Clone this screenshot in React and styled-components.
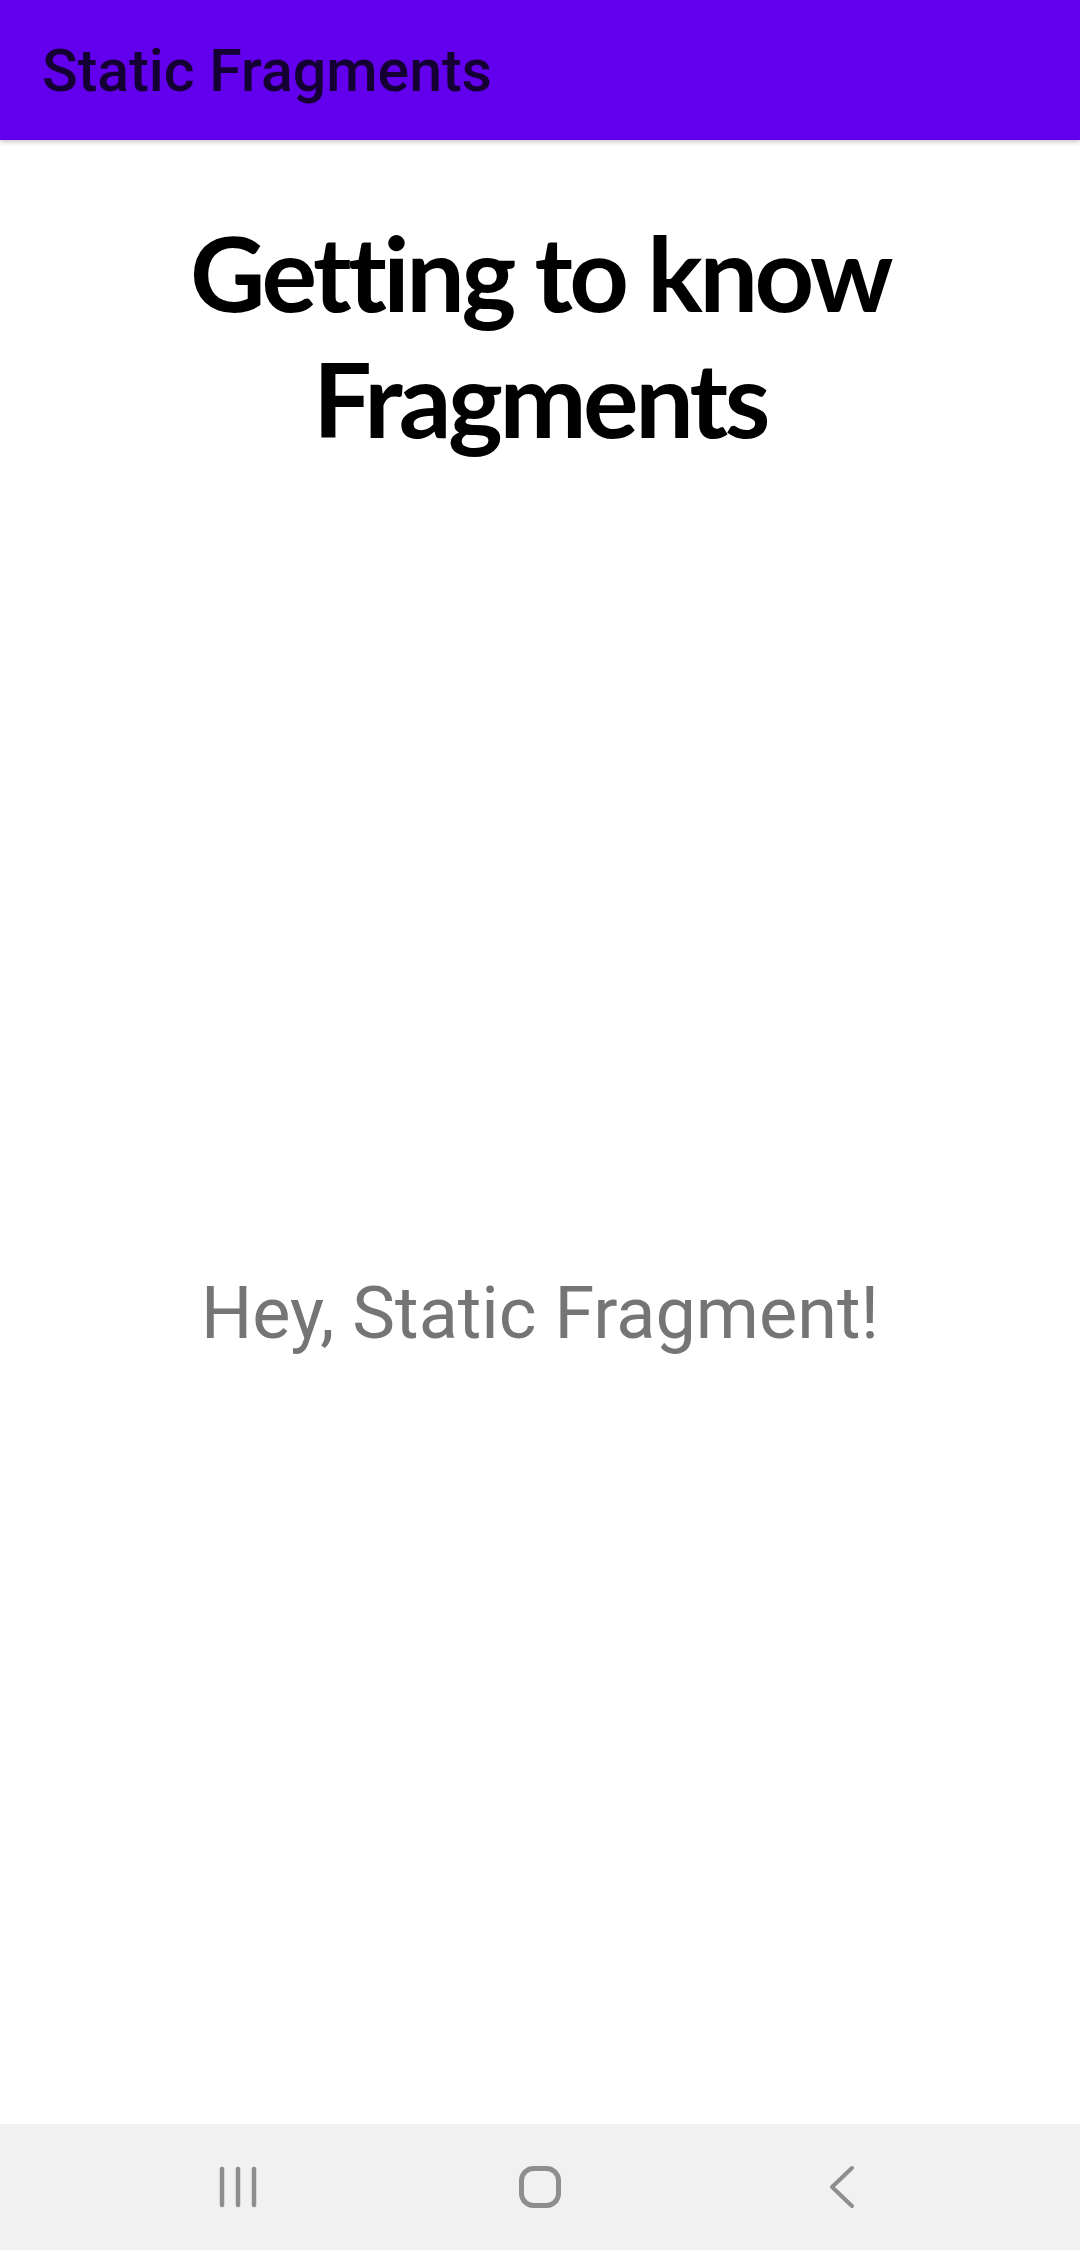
import styled, { createGlobalStyle } from "styled-components";

const GlobalStyle = createGlobalStyle`
  html, body {
    margin: 0;
    padding: 0;
    background: #ffffff;
  }
  body {
    font-family: Roboto, "Noto Sans", sans-serif;
  }
`;

const Screen = styled.div`
  display: flex;
  flex-direction: column;
  width: 1080px;
  height: 2250px;
  background: #ffffff;
  overflow: hidden;
`;

const AppBar = styled.header`
  display: flex;
  align-items: center;
  flex: 0 0 140px;
  padding: 0 42px;
  background: #6200ee;
  box-shadow: 0 2px 5px rgba(0, 0, 0, 0.22);
  position: relative;
  z-index: 1;
`;

const AppTitle = styled.h1`
  margin: 0;
  font-family: Roboto, sans-serif;
  font-weight: 500;
  font-size: 59px;
  color: #150033;
`;

const Content = styled.main`
  flex: 1;
  display: flex;
  flex-direction: column;
  align-items: center;
`;

const Heading = styled.h2`
  margin: 69px 0 0;
  font-family: Lato, "Open Sans", sans-serif;
  font-weight: 700;
  font-size: 104px;
  line-height: 126px;
  letter-spacing: -3.5px;
  color: #000000;
  text-align: center;
`;

const FragmentArea = styled.section`
  flex: 1;
  display: flex;
  align-items: center;
  justify-content: center;
  padding-top: 41px;
`;

const Greeting = styled.p`
  margin: 0;
  font-family: Roboto, sans-serif;
  font-size: 72px;
  color: #757575;
`;

const NavBar = styled.nav`
  flex: 0 0 126px;
  display: grid;
  grid-template-columns: repeat(3, 302px);
  justify-content: center;
  align-items: center;
  background: #f1f1f1;
`;

const NavButton = styled.div`
  display: flex;
  justify-content: center;
  align-items: center;
  height: 100%;
  color: #8e8e8e;
`;

const RecentsIcon = () => (
  <svg width="44" height="42" viewBox="0 0 44 42">
    <g stroke="currentColor" strokeWidth="4.5" strokeLinecap="round">
      <line x1="6" y1="3" x2="6" y2="39" />
      <line x1="22" y1="3" x2="22" y2="39" />
      <line x1="38" y1="3" x2="38" y2="39" />
    </g>
  </svg>
);

const HomeIcon = () => (
  <svg width="44" height="44" viewBox="0 0 44 44">
    <rect
      x="3.5"
      y="3.5"
      width="37"
      height="37"
      rx="12"
      fill="none"
      stroke="currentColor"
      strokeWidth="5"
    />
  </svg>
);

const BackIcon = () => (
  <svg width="28" height="44" viewBox="0 0 28 44">
    <polyline
      points="24,3 4,22 24,41"
      fill="none"
      stroke="currentColor"
      strokeWidth="4"
      strokeLinecap="round"
      strokeLinejoin="round"
    />
  </svg>
);

export default function App() {
  return (
    <>
      <GlobalStyle />
      <Screen>
        <AppBar>
          <AppTitle>Static Fragments</AppTitle>
        </AppBar>
        <Content>
          <Heading>
            Getting to know
            <br />
            Fragments
          </Heading>
          <FragmentArea>
            <Greeting>Hey, Static Fragment!</Greeting>
          </FragmentArea>
        </Content>
        <NavBar>
          <NavButton>
            <RecentsIcon />
          </NavButton>
          <NavButton>
            <HomeIcon />
          </NavButton>
          <NavButton>
            <BackIcon />
          </NavButton>
        </NavBar>
      </Screen>
    </>
  );
}
